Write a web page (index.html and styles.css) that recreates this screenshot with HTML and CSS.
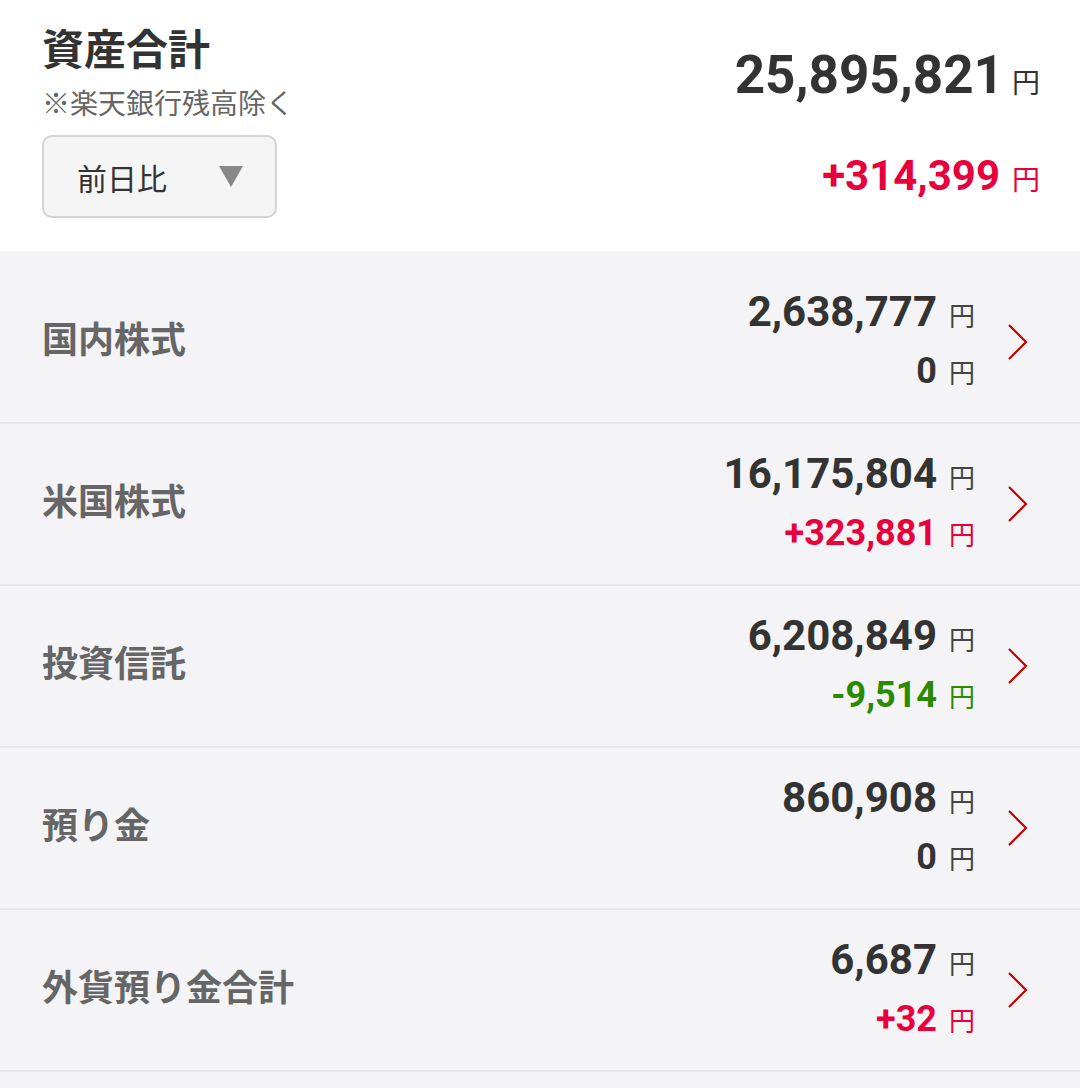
FILE: index.html
```html
<!DOCTYPE html>
<html lang="ja">
<head>
  <meta charset="UTF-8" />
  <meta name="viewport" content="width=device-width, initial-scale=1.0" />
  <title>資産合計</title>
  <link rel="stylesheet" href="styles.css">
</head>
<body>
  <div class="summary">
    <div class="summary-left">
      <div class="title">資産合計</div>
      <div class="note">※楽天銀行残高除く</div>
      <div class="select">
        <span>前日比</span>
        <svg class="caret" width="24" height="21" viewBox="0 0 24 21"><polygon points="0,0 24,0 12,21" fill="#888"/></svg>
      </div>
    </div>
    <div class="summary-right">
      <div class="total">25,895,821<span class="yen">円</span></div>
      <div class="diff plus">+314,399<span class="yen">円</span></div>
    </div>
  </div>

  <div class="list">
    <div class="row">
      <div class="label">国内株式</div>
      <div class="values">
        <div class="amount">2,638,777<span class="yen">円</span></div>
        <div class="change">0<span class="yen">円</span></div>
      </div>
      <svg class="chevron" width="20" height="36" viewBox="0 0 20 36"><polyline points="1,1 18,18 1,35" fill="none" stroke="#c40000" stroke-width="2.2"/></svg>
    </div>
    <div class="row">
      <div class="label">米国株式</div>
      <div class="values">
        <div class="amount">16,175,804<span class="yen">円</span></div>
        <div class="change plus">+323,881<span class="yen">円</span></div>
      </div>
      <svg class="chevron" width="20" height="36" viewBox="0 0 20 36"><polyline points="1,1 18,18 1,35" fill="none" stroke="#c40000" stroke-width="2.2"/></svg>
    </div>
    <div class="row">
      <div class="label">投資信託</div>
      <div class="values">
        <div class="amount">6,208,849<span class="yen">円</span></div>
        <div class="change minus">-9,514<span class="yen">円</span></div>
      </div>
      <svg class="chevron" width="20" height="36" viewBox="0 0 20 36"><polyline points="1,1 18,18 1,35" fill="none" stroke="#c40000" stroke-width="2.2"/></svg>
    </div>
    <div class="row">
      <div class="label">預り金</div>
      <div class="values">
        <div class="amount">860,908<span class="yen">円</span></div>
        <div class="change">0<span class="yen">円</span></div>
      </div>
      <svg class="chevron" width="20" height="36" viewBox="0 0 20 36"><polyline points="1,1 18,18 1,35" fill="none" stroke="#c40000" stroke-width="2.2"/></svg>
    </div>
    <div class="row">
      <div class="label">外貨預り金合計</div>
      <div class="values">
        <div class="amount">6,687<span class="yen">円</span></div>
        <div class="change plus">+32<span class="yen">円</span></div>
      </div>
      <svg class="chevron" width="20" height="36" viewBox="0 0 20 36"><polyline points="1,1 18,18 1,35" fill="none" stroke="#c40000" stroke-width="2.2"/></svg>
    </div>
  </div>
</body>
</html>
```

FILE: styles.css
```css
* {
  box-sizing: border-box;
}

body {
  margin: 0;
  background: #f4f4f6;
  font-family: Roboto, "Noto Sans CJK JP", sans-serif;
  color: #333;
}

.summary {
  background: #fff;
  height: 251px;
  padding: 26px 40px 0 42px;
  display: flex;
  justify-content: space-between;
}

.title {
  font-size: 42px;
  font-weight: 700;
  line-height: 50px;
}

.note {
  font-size: 28px;
  color: #666;
  line-height: 36px;
  margin-top: 11px;
}

.select {
  margin-top: 12px;
  width: 235px;
  height: 83px;
  border: 2px solid #d4d4d4;
  border-radius: 10px;
  background: #f5f5f5;
  display: flex;
  align-items: center;
  padding: 0 32px 0 33px;
  justify-content: space-between;
  font-size: 30px;
}

.summary-right {
  display: flex;
  flex-direction: column;
  align-items: flex-end;
  padding-top: 17px;
}

.total {
  font-size: 53px;
  font-weight: 700;
  line-height: 64px;
}

.total .yen {
  font-size: 28px;
  font-weight: 400;
  margin-left: 8px;
}

.diff {
  margin-top: 34px;
  font-size: 42px;
  font-weight: 700;
  line-height: 52px;
}

.diff .yen {
  font-size: 28px;
  font-weight: 400;
  margin-left: 12px;
}

.plus {
  color: #e8003d;
}

.minus {
  color: #2a8a00;
}

.list {
  padding-top: 11px;
}

.row {
  height: 162px;
  border-bottom: 2px solid #e6e6e8;
  display: flex;
  align-items: center;
  padding: 0 52px 0 42px;
}

.label {
  flex: 1;
  font-size: 36px;
  font-weight: 700;
  color: #666;
  padding-bottom: 10px;
}

.values {
  display: flex;
  flex-direction: column;
  align-items: flex-end;
  margin-right: 33px;
}

.amount {
  font-size: 42px;
  font-weight: 700;
  line-height: 52px;
}

.change {
  font-size: 36px;
  font-weight: 700;
  line-height: 48px;
  margin-top: 4px;
}

.values .yen {
  font-size: 26px;
  font-weight: 400;
  color: #444;
  margin-left: 12px;
}

.change.plus .yen {
  color: #e8003d;
}

.change.minus .yen {
  color: #2a8a00;
}
```
